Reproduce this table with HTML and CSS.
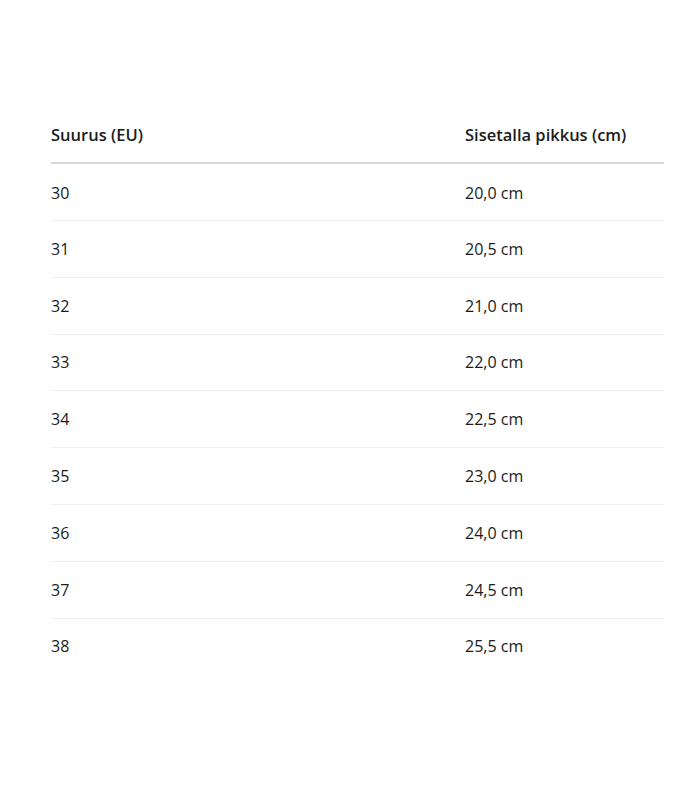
FILE: index.html
```
<!DOCTYPE html>
<html lang="fi">
<head>
<meta charset="utf-8">
<link rel="stylesheet" href="styles.css">
</head>
<body>
<main class="page">
  <table class="size-table">
    <thead>
      <tr><th class="col-size">Suurus (EU)</th><th>Sisetalla pikkus (cm)</th></tr>
    </thead>
    <tbody>
      <tr><td>30</td><td>20,0 cm</td></tr>
      <tr><td>31</td><td>20,5 cm</td></tr>
      <tr><td>32</td><td>21,0 cm</td></tr>
      <tr><td>33</td><td>22,0 cm</td></tr>
      <tr><td>34</td><td>22,5 cm</td></tr>
      <tr><td>35</td><td>23,0 cm</td></tr>
      <tr><td>36</td><td>24,0 cm</td></tr>
      <tr><td>37</td><td>24,5 cm</td></tr>
      <tr><td>38</td><td>25,5 cm</td></tr>
    </tbody>
  </table>
</main>
</body>
</html>
```
FILE: styles.css
```
html, body {
  margin: 0;
  padding: 0;
  background: #fff;
}
body {
  font-family: "Open Sans", "Noto Sans", sans-serif;
  color: #1b1b1b;
  font-size: 16px;
}
.page {
  padding: 107px 36px 0 51px;
}
.size-table {
  width: 613px;
  border-collapse: collapse;
  table-layout: fixed;
}
.size-table th,
.size-table td {
  text-align: left;
  padding: 0;
  vertical-align: middle;
  line-height: 24px;
}
.size-table th {
  font-weight: 600;
  font-size: 16.5px;
  border-bottom: 2px solid #d6d6d6;
  height: 55px;
}
.size-table .col-size {
  width: 414px;
}
.size-table td {
  height: 55.8px;
  border-bottom: 1px solid #f0f0f0;
}
.size-table tbody tr:first-child td {
  height: 55px;
  padding-top: 1px;
}
.size-table tbody tr:last-child td {
  border-bottom: none;
}
```
